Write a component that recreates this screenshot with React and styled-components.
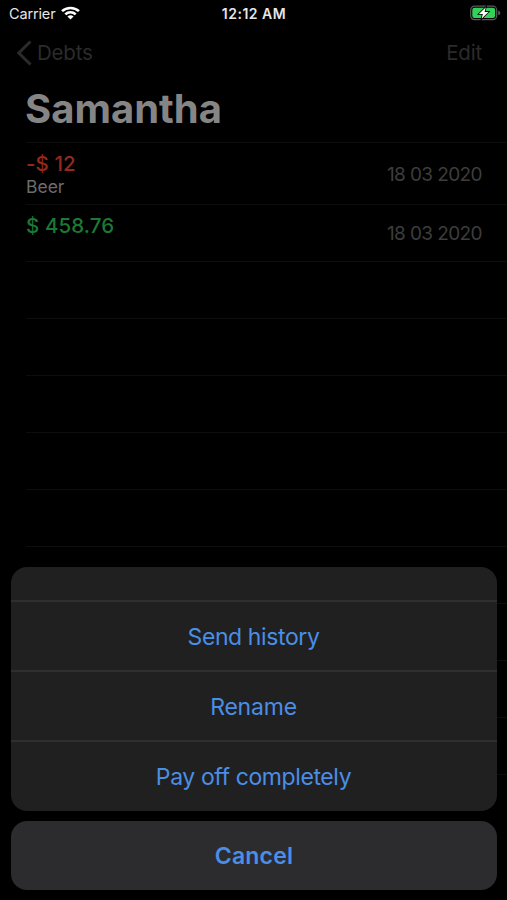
import React from 'react'
import styled, { createGlobalStyle } from 'styled-components'

const debts = [
   { id: 1, amount: '-$ 12', note: 'Beer', date: '18 03 2020', color: '#94281f' },
   { id: 2, amount: '$ 458.76', date: '18 03 2020', color: '#1a7a34' },
]

const emptyRows = [1, 2, 3, 4, 5, 6, 7, 8, 9, 10]

const actions = [
   { id: 1, title: 'Send history', spacing: '-0.4px' },
   { id: 2, title: 'Rename', spacing: '-0.2px' },
   { id: 3, title: 'Pay off completely', spacing: '-0.4px' },
]

const WifiIcon = () => (
   <svg width="19" height="14" viewBox="0 0 18 14" preserveAspectRatio="none">
      <g fill="none" stroke="#fff" strokeWidth="2.5">
         <path d="M1 5.2A11.3 11.3 0 0 1 17 5.2" />
         <path d="M4.1 8.3A6.9 6.9 0 0 1 13.9 8.3" />
      </g>
      <path d="M6.1 10.6A4.1 4.1 0 0 1 11.9 10.6L9 13.6Z" fill="#fff" />
   </svg>
)

const BatteryIcon = () => (
   <svg width="31" height="16" viewBox="0 0 31 16">
      <rect x="0.7" y="1.2" width="26" height="13.4" rx="3.8" fill="none" stroke="#5a5a5a" strokeWidth="1.2" />
      <rect x="2.3" y="2.8" width="22.8" height="10.2" rx="2.2" fill="#32d158" />
      <path d="M28.2 5.6Q30.4 6.2 30.4 7.9T28.2 10.2Z" fill="#5a5a5a" />
      <path
         d="M15.8 2.2L8.9 8.9H12.8L11.6 13.8L18.5 6.9H14.6Z"
         fill="#fff"
         stroke="#000"
         strokeWidth="1.6"
         paintOrder="stroke"
      />
   </svg>
)

const BackIcon = () => (
   <svg width="16" height="26" viewBox="0 0 16 26">
      <path d="M14.5 1.5L2.8 13L14.5 24.5" fill="none" stroke="#2b2b2b" strokeWidth="3" />
   </svg>
)

const App = () => {
   return (
      <Screen>
         <GlobalStyle />
         <StatusBar>
            <Carrier>
               Carrier
               <WifiIcon />
            </Carrier>
            <Time>12:12 AM</Time>
            <Battery>
               <BatteryIcon />
            </Battery>
         </StatusBar>
         <NavBar>
            <NavButton>
               <BackIcon />
               Debts
            </NavButton>
            <NavButton>Edit</NavButton>
         </NavBar>
         <Title>Samantha</Title>
         <List>
            {debts.map((item) => (
               <Row key={item.id} $height={item.note ? 62 : 57}>
                  <RowInfo>
                     <Amount $color={item.color}>{item.amount}</Amount>
                     {item.note && <Note>{item.note}</Note>}
                  </RowInfo>
                  <RowDate>{item.date}</RowDate>
               </Row>
            ))}
            {emptyRows.map((id) => (
               <Row key={id} $height={57} />
            ))}
         </List>
         <Sheet>
            <ActionGroup>
               <SheetHeader />
               {actions.map((action) => (
                  <ActionButton key={action.id} $spacing={action.spacing}>
                     {action.title}
                  </ActionButton>
               ))}
            </ActionGroup>
            <CancelButton>Cancel</CancelButton>
         </Sheet>
      </Screen>
   )
}

const GlobalStyle = createGlobalStyle`
   * {
      box-sizing: border-box;
   }

   body {
      margin: 0;
      background: #000;
   }

   button {
      padding: 0;
      border: none;
      background: none;
      font-family: inherit;
   }
`

const Screen = styled.div`
   position: relative;
   width: 507px;
   height: 900px;
   overflow: hidden;
   background: #000;
   font-family: 'Inter', sans-serif;
`

const StatusBar = styled.header`
   display: grid;
   grid-template-columns: 1fr auto 1fr;
   align-items: center;
   height: 27px;
   padding: 0 6px 0 9px;
   color: #e6e6e6;
   font-size: 14.5px;
   line-height: 27px;
`

const Carrier = styled.div`
   display: flex;
   align-items: center;
   gap: 6px;
   letter-spacing: -0.15px;

   svg {
      margin-top: -1px;
   }
`

const Time = styled.div`
   margin-right: 2px;
   font-weight: 600;
   font-size: 14px;
   letter-spacing: 0.5px;
`

const Battery = styled.div`
   display: flex;
   justify-content: flex-end;
   margin-top: -1px;
`

const NavBar = styled.nav`
   display: flex;
   align-items: center;
   justify-content: space-between;
   height: 51px;
   padding: 0 25px 0 16px;
`

const NavButton = styled.button`
   display: flex;
   align-items: center;
   gap: 5px;
   color: #2b2b2b;
   font-size: 20.5px;
   line-height: 26px;
   letter-spacing: -0.2px;
`

const Title = styled.h1`
   height: 64px;
   margin: 0;
   padding-left: 25px;
   color: #858585;
   font-size: 40px;
   font-weight: 700;
   line-height: 62px;
`

const List = styled.div`
   display: flex;
   flex-direction: column;
   margin-left: 26px;
`

const Row = styled.div`
   display: flex;
   flex-shrink: 0;
   align-items: center;
   justify-content: space-between;
   height: ${({ $height }) => $height}px;
   padding-right: 25px;
   border-top: 1px solid #0d0d0d;
`

const RowInfo = styled.div`
   display: flex;
   flex-direction: column;
   align-self: flex-start;
   padding-top: 8px;
`

const Amount = styled.span`
   color: ${({ $color }) => $color};
   font-size: 20.5px;
   font-weight: 500;
   line-height: 25px;
   letter-spacing: 0.1px;
`

const Note = styled.span`
   color: #6c6c6c;
   font-size: 17.5px;
   line-height: 21px;
`

const RowDate = styled.span`
   padding-top: 2px;
   color: #3d3d3d;
   font-size: 19px;
   line-height: 24px;
   letter-spacing: -0.6px;
`

const Sheet = styled.div`
   position: absolute;
   right: 10px;
   bottom: 10px;
   left: 11px;
   display: flex;
   flex-direction: column;
   gap: 10px;
   color: #4a8ee6;
`

const ActionGroup = styled.div`
   display: flex;
   flex-direction: column;
   overflow: hidden;
   border-radius: 16px;
   background: #202020;
`

const SheetHeader = styled.div`
   height: 33px;
`

const ActionButton = styled.button`
   height: 70px;
   padding: 2px 1px 0 0;
   border-top: 2px solid #2f2f30;
   color: inherit;
   font-size: 23px;
   letter-spacing: ${({ $spacing }) => $spacing};

   &:last-child {
      height: 71px;
      padding-top: 1px;
   }
`

const CancelButton = styled.button`
   height: 69px;
   border-radius: 16px;
   background: #2c2c2e;
   color: inherit;
   font-size: 23px;
   font-weight: 600;
   letter-spacing: 0.2px;
`

export default App
